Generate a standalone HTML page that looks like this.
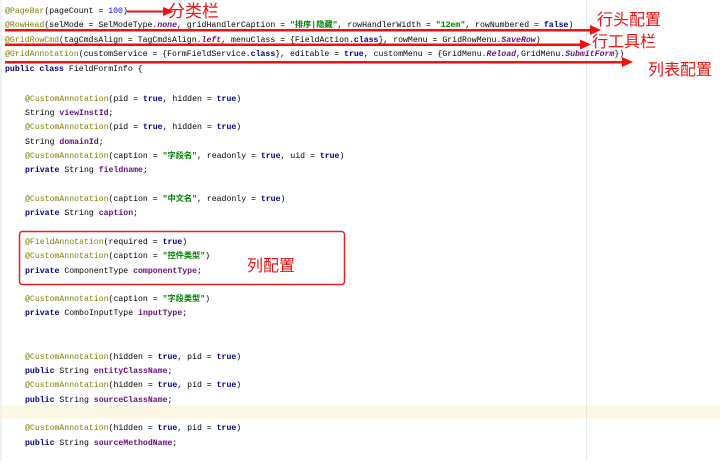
<!DOCTYPE html>
<html><head><meta charset="utf-8"><style>
body{margin:0;width:720px;height:461px;background:#fff;position:relative;overflow:hidden;font-family:"Liberation Mono","Noto Sans CJK SC",monospace;}
.w{position:absolute;left:0;top:2px;width:720px;height:461px}
.l{position:absolute;left:5px;font-size:8.2px;white-space:pre;color:#000;line-height:12px;}
.i{left:25px}
.a{color:#808000}
.k{color:#000080;font-weight:bold}
.s{color:#008000;font-weight:bold}
.f{color:#660e7a;font-weight:bold}
.it{color:#660e7a;font-style:italic;font-weight:bold}
.r{position:absolute;color:#f01010;font-family:"Liberation Sans","Noto Sans CJK SC",sans-serif;font-size:16px;line-height:18px;white-space:nowrap}
.vline{position:absolute;left:586px;top:0;width:1px;height:461px;background:#e6e6e6}
.hl{position:absolute;left:0;top:405px;width:720px;height:14px;background:#fdf8e4}
.gut{position:absolute;left:0;top:0;width:2px;height:461px;background:#f0f0f0}
</style></head><body>
<div class="hl"></div><div class="vline"></div><div class="gut"></div>
<div class="w">
<div class="l" style="top:4px"><span class="a">@PageBar</span>(pageCount = <span style="color:#0000ff">100</span>)</div>
<div class="l" style="top:18px"><span class="a">@RowHead</span>(selMode = SelModeType.<span class="it">none</span>, gridHandlerCaption = <span class="s">"排序|隐藏"</span>, rowHandlerWidth = <span class="s">"12em"</span>, rowNumbered = <span class="k">false</span>)</div>
<div class="l" style="top:33px"><span class="a">@GridRowCmd</span>(tagCmdsAlign = TagCmdsAlign.<span class="it">left</span>, menuClass = {FieldAction.<span class="k">class</span>}, rowMenu = GridRowMenu.<span class="it">SaveRow</span>)</div>
<div class="l" style="top:47px"><span class="a">@GridAnnotation</span>(customService = {FormFieldService.<span class="k">class</span>}, editable = <span class="k">true</span>, customMenu = {GridMenu.<span class="it">Reload</span>,GridMenu.<span class="it">SubmitForm</span>})</div>
<div class="l" style="top:62px"><span class="k">public class</span> FieldFormInfo {</div>

<div class="l i" style="top:92px"><span class="a">@CustomAnnotation</span>(pid = <span class="k">true</span>, hidden = <span class="k">true</span>)</div>
<div class="l i" style="top:106px">String <span class="f">viewInstId</span>;</div>
<div class="l i" style="top:120px"><span class="a">@CustomAnnotation</span>(pid = <span class="k">true</span>, hidden = <span class="k">true</span>)</div>
<div class="l i" style="top:135px">String <span class="f">domainId</span>;</div>
<div class="l i" style="top:149px"><span class="a">@CustomAnnotation</span>(caption = <span class="s">"字段名"</span>, readonly = <span class="k">true</span>, uid = <span class="k">true</span>)</div>
<div class="l i" style="top:163px"><span class="k">private</span> String <span class="f">fieldname</span>;</div>
<div class="l i" style="top:192px"><span class="a">@CustomAnnotation</span>(caption = <span class="s">"中文名"</span>, readonly = <span class="k">true</span>)</div>
<div class="l i" style="top:206px"><span class="k">private</span> String <span class="f">caption</span>;</div>
<div class="l i" style="top:235px"><span class="a">@FieldAnnotation</span>(required = <span class="k">true</span>)</div>
<div class="l i" style="top:249px"><span class="a">@CustomAnnotation</span>(caption = <span class="s">"控件类型"</span>)</div>
<div class="l i" style="top:264px"><span class="k">private</span> ComponentType <span class="f">componentType</span>;</div>
<div class="l i" style="top:292px"><span class="a">@CustomAnnotation</span>(caption = <span class="s">"字段类型"</span>)</div>
<div class="l i" style="top:306px"><span class="k">private</span> ComboInputType <span class="f">inputType</span>;</div>
<div class="l i" style="top:350px"><span class="a">@CustomAnnotation</span>(hidden = <span class="k">true</span>, pid = <span class="k">true</span>)</div>
<div class="l i" style="top:364px"><span class="k">public</span> String <span class="f">entityClassName</span>;</div>
<div class="l i" style="top:378px"><span class="a">@CustomAnnotation</span>(hidden = <span class="k">true</span>, pid = <span class="k">true</span>)</div>
<div class="l i" style="top:393px"><span class="k">public</span> String <span class="f">sourceClassName</span>;</div>
<div class="l i" style="top:421px"><span class="a">@CustomAnnotation</span>(hidden = <span class="k">true</span>, pid = <span class="k">true</span>)</div>
<div class="l i" style="top:436px"><span class="k">public</span> String <span class="f">sourceMethodName</span>;</div>
</div>
<svg style="position:absolute;left:0;top:0" width="720" height="461">
<g fill="#f01010" stroke="none">
<rect x="127" y="10.5" width="38" height="2"/><polygon points="163,7 174,11.5 163,16"/>
<rect x="5" y="29" width="588" height="2.5"/><polygon points="590,25 601,30 590,35"/>
<rect x="5" y="43.5" width="578" height="2.5"/><polygon points="580,39.5 591,44.5 580,49.5"/>
<rect x="5" y="61" width="620" height="2.5"/><polygon points="622,57 633,62 622,67"/>
</g>
<rect x="19.5" y="231.5" width="325" height="53" rx="3" fill="none" stroke="#e02020" stroke-width="1.5"/>
</svg>
<div class="r" style="left:168px;top:3px;font-size:17px">分类栏</div>
<div class="r" style="left:597px;top:12px">行头配置</div>
<div class="r" style="left:592px;top:34px">行工具栏</div>
<div class="r" style="left:648px;top:62px">列表配置</div>
<div class="r" style="left:247px;top:258px">列配置</div>
</body></html>
